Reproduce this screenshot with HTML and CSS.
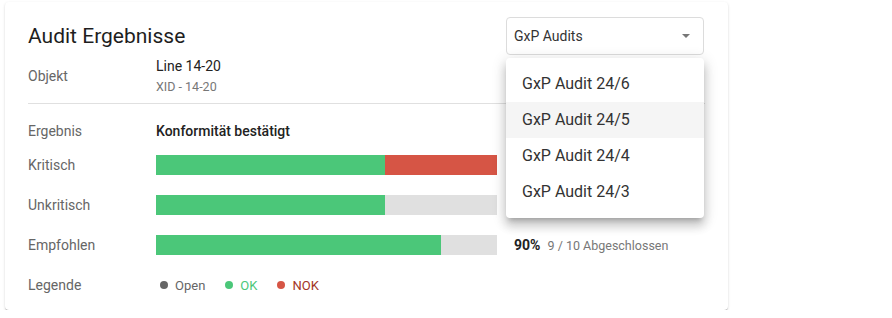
FILE: index.html
```html
<!DOCTYPE html>
<html lang="de">
<head>
    <meta charset="UTF-8">
    <meta name="viewport" content="width=device-width, initial-scale=1.0">
    <title>Audit Ergebnisse</title>
    <link rel="stylesheet" href="styles.css">
</head>
<body>
    <div class="card">
        <div class="card-header">
            <h2 class="title">Audit Ergebnisse</h2>
            <div class="select">
                <div class="select-box">
                    <span>GxP Audits</span>
                    <span class="arrow"></span>
                </div>
                <div class="menu">
                    <div class="menu-item">GxP Audit 24/6</div>
                    <div class="menu-item active">GxP Audit 24/5</div>
                    <div class="menu-item">GxP Audit 24/4</div>
                    <div class="menu-item">GxP Audit 24/3</div>
                </div>
            </div>
        </div>

        <div class="row object-row">
            <div class="label">Objekt</div>
            <div class="object">
                <div class="object-name">Line 14-20</div>
                <div class="object-id">XID - 14-20</div>
            </div>
        </div>

        <div class="divider"></div>

        <div class="row result-row">
            <div class="label">Ergebnis</div>
            <div class="result">Konformität bestätigt</div>
        </div>

        <div class="row bar-row">
            <div class="label">Kritisch</div>
            <div class="bar">
                <div class="bar-ok" style="width: 67.2%"></div>
                <div class="bar-nok" style="width: 32.8%"></div>
            </div>
        </div>

        <div class="row bar-row">
            <div class="label">Unkritisch</div>
            <div class="bar">
                <div class="bar-ok" style="width: 67.2%"></div>
            </div>
        </div>

        <div class="row bar-row">
            <div class="label">Empfohlen</div>
            <div class="bar">
                <div class="bar-ok" style="width: 83.6%"></div>
            </div>
            <div class="stat"><b>90%</b> 9 / 10 Abgeschlossen</div>
        </div>

        <div class="row bar-row">
            <div class="label">Legende</div>
            <div class="legend">
                <span class="legend-item open"><i class="dot"></i>Open</span>
                <span class="legend-item ok"><i class="dot"></i>OK</span>
                <span class="legend-item nok"><i class="dot"></i>NOK</span>
            </div>
        </div>
    </div>
</body>
</html>
```

FILE: styles.css
```css
body {
    margin: 0;
    padding: 2px 0 0 5px;
    background: #fff;
    font-family: Roboto, "Liberation Sans", Arial, sans-serif;
    color: #222;
}

.card {
    width: 677px;
    padding: 15px 23px 5px 23px;
    background: #fff;
    border-radius: 4px;
    box-shadow: 0 2px 1px -1px rgba(0, 0, 0, 0.2), 0 1px 1px 0 rgba(0, 0, 0, 0.14), 0 1px 3px 0 rgba(0, 0, 0, 0.12);
}

.card-header {
    display: flex;
    justify-content: space-between;
    align-items: center;
    height: 38px;
}

.title {
    margin: 0;
    font-size: 21px;
    font-weight: 400;
    color: #1e1e1e;
}

.select {
    position: relative;
    width: 198px;
    margin-right: 1px;
}

.select-box {
    display: flex;
    justify-content: space-between;
    align-items: center;
    box-sizing: border-box;
    height: 38px;
    padding: 0 13px 0 7px;
    border: 1px solid #dcdcdc;
    border-radius: 4px;
    font-size: 14px;
    color: #333;
}

.arrow {
    width: 0;
    height: 0;
    border-left: 4px solid transparent;
    border-right: 4px solid transparent;
    border-top: 4px solid #777;
}

.menu {
    position: absolute;
    top: 41px;
    left: 0;
    right: 0;
    z-index: 10;
    padding: 8px 0;
    background: #fff;
    border-radius: 4px;
    box-shadow: 0 5px 5px -3px rgba(0, 0, 0, 0.2), 0 8px 10px 1px rgba(0, 0, 0, 0.14), 0 3px 14px 2px rgba(0, 0, 0, 0.12);
}

.menu-item {
    height: 36px;
    line-height: 36px;
    padding-left: 16px;
    font-size: 16px;
    color: #333;
}

.menu-item.active {
    background: #f5f5f5;
}

.row {
    display: flex;
    align-items: center;
}

.label {
    width: 128px;
    flex-shrink: 0;
    font-size: 14px;
    color: #666;
}

.object-row {
    margin-top: 1px;
    height: 40px;
}

.object-name {
    font-size: 14px;
    line-height: 20px;
    color: #222;
}

.object-id {
    margin-top: 2px;
    font-size: 12.5px;
    line-height: 18px;
    color: #777;
}

.divider {
    margin-top: 7px;
    border-top: 1px solid #e0e0e0;
}

.result-row {
    height: 20px;
    margin-top: 17px;
    margin-bottom: 4px;
}

.result {
    font-size: 14px;
    font-weight: 500;
    color: #222;
}

.bar-row {
    height: 40px;
}

.bar {
    display: flex;
    width: 341px;
    height: 20px;
    background: #e0e0e0;
}

.bar-ok {
    background: #4bc779;
}

.bar-nok {
    background: #d65545;
}

.stat {
    margin-left: 17px;
    font-size: 12.5px;
    color: #777;
}

.stat b {
    margin-right: 4px;
    font-size: 14px;
    font-weight: 700;
    color: #222;
}

.legend {
    display: flex;
    gap: 20px;
    padding-left: 4px;
    font-size: 13px;
}

.legend-item {
    display: flex;
    align-items: center;
    gap: 7px;
}

.dot {
    width: 8px;
    height: 8px;
    border-radius: 50%;
}

.open {
    color: #666;
}

.open .dot {
    background: #666;
}

.ok {
    color: #4bc779;
}

.ok .dot {
    background: #4bc779;
}

.nok {
    color: #a33526;
}

.nok .dot {
    background: #d65545;
}
```
